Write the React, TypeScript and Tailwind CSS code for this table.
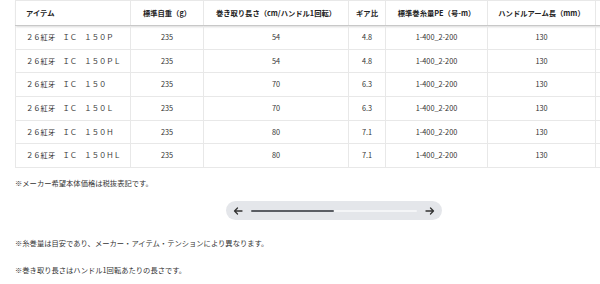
import React from "react";

const rows = [
  ["２６紅牙　ＩＣ　１５０Ｐ", "235", "54", "4.8", "1-400_2-200", "130"],
  ["２６紅牙　ＩＣ　１５０ＰＬ", "235", "54", "4.8", "1-400_2-200", "130"],
  ["２６紅牙　ＩＣ　１５０", "235", "70", "6.3", "1-400_2-200", "130"],
  ["２６紅牙　ＩＣ　１５０Ｌ", "235", "70", "6.3", "1-400_2-200", "130"],
  ["２６紅牙　ＩＣ　１５０Ｈ", "235", "80", "7.1", "1-400_2-200", "130"],
  ["２６紅牙　ＩＣ　１５０ＨＬ", "235", "80", "7.1", "1-400_2-200", "130"],
];

const headers = [
  "アイテム",
  "標準自重（g）",
  "巻き取り長さ（cm/ハンドル1回転）",
  "ギア比",
  "標準巻糸量PE（号-m）",
  "ハンドルアーム長（mm）",
  "",
];

const widths = ["w-[115px]", "w-[73px]", "w-[145px]", "w-[37px]", "w-[102px]", "w-[108px]", "w-[110px]"];

export default function App() {
  return (
    <div
      className="w-[600px] h-[284px] bg-white text-[#333] overflow-hidden"
      style={{ fontFamily: '"Noto Sans CJK JP", "Noto Sans", sans-serif' }}
    >
      <div className="pl-[15px] overflow-hidden">
        <table className="table-fixed border-collapse w-[690px] text-[7.3px]">
          <colgroup>
            {widths.map((w, i) => (
              <col key={i} className={w} />
            ))}
          </colgroup>
          <thead>
            <tr className="h-[25px] shadow-[0_1px_2px_rgba(0,0,0,0.15)]">
              {headers.map((h, i) => (
                <th
                  key={i}
                  className={`border-l border-r border-t border-[#e8e8e8] border-b border-b-[#c8c8c8] font-bold text-[#222] whitespace-nowrap ${
                    i === 0 ? "text-left pl-[10px]" : "text-center"
                  }`}
                >
                  {h}
                </th>
              ))}
            </tr>
          </thead>
          <tbody>
            {rows.map((r, ri) => (
              <tr key={ri} className="h-[23.7px]">
                {[...r, ""].map((c, ci) => (
                  <td
                    key={ci}
                    className={`border border-[#e8e8e8] whitespace-nowrap text-[#333] ${
                      ci === 0 ? "text-left pl-[10px]" : "text-center"
                    }`}
                  >
                    {c}
                  </td>
                ))}
              </tr>
            ))}
          </tbody>
        </table>
      </div>

      <div className="pl-[15px] mt-[10px] text-[7.3px] leading-[10px] text-[#333]">
        ※メーカー希望本体価格は税抜表記です。
      </div>

      <div className="flex justify-center mt-[13px] pl-[68px]">
        <div className="w-[216px] h-[19px] rounded-full bg-[#e4e6ea] flex items-center px-[7px] gap-[8px]">
          <svg width="10" height="10" viewBox="0 0 10 10" className="shrink-0">
            <path d="M9 5H1.5M4.5 2L1.5 5L4.5 8" fill="none" stroke="#333" strokeWidth="1.3" strokeLinecap="round" strokeLinejoin="round" />
          </svg>
          <div className="flex-1 h-[2px] bg-[#f4f5f7] rounded-full flex">
            <div className="w-[50%] h-full bg-[#5a5d63] rounded-full" />
          </div>
          <svg width="10" height="10" viewBox="0 0 10 10" className="shrink-0">
            <path d="M1 5H8.5M5.5 2L8.5 5L5.5 8" fill="none" stroke="#333" strokeWidth="1.3" strokeLinecap="round" strokeLinejoin="round" />
          </svg>
        </div>
      </div>

      <div className="pl-[15px] mt-[18px] text-[7.3px] leading-[10px] text-[#333]">
        ※糸巻量は目安であり、メーカー・アイテム・テンションにより異なります。
      </div>
      <div className="pl-[15px] mt-[17px] text-[7.3px] leading-[10px] text-[#333]">
        ※巻き取り長さはハンドル1回転あたりの長さです。
      </div>
    </div>
  );
}
